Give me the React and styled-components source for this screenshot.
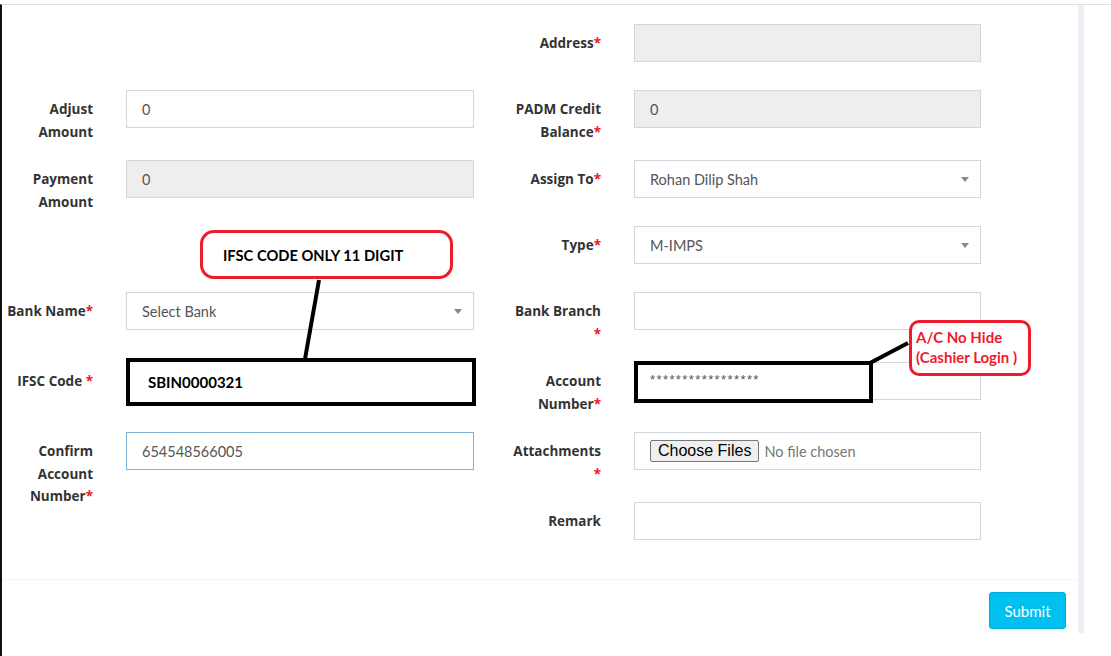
import React from "react";
import styled, { createGlobalStyle } from "styled-components";

const GlobalStyle = createGlobalStyle`
  html, body { margin: 0; padding: 0; background: #fff; }
  body { font-family: Lato, "Open Sans", sans-serif; color: #333; }
  * { box-sizing: border-box; }
`;

const Page = styled.div`
  width: 1111px;
  height: 656px;
  padding-top: 4px;
  overflow: hidden;
`;

const Frame = styled.div`
  height: 652px;
  border-top: 1px solid #dcdfe4;
  border-left: 2px solid #111;
`;

const Row = styled.div`
  display: flex;
  align-items: stretch;
`;

const Panel = styled.div`
  position: relative;
  width: 1076px;
  background: #fff;
`;

const Strip = styled.div`
  width: 6px;
  background: #eef0f5;
`;

const Body = styled.div`
  padding-top: 19px;
`;

const FormRow = styled.div`
  display: grid;
  grid-template-columns: 124px 348px 160px 347px;
  height: ${({ $h }) => $h}px;
  align-items: start;
`;

const Label = styled.div`
  padding: 8px 33px 0 0;
  text-align: right;
  font-family: "Open Sans", Lato, sans-serif;
  font-size: 13.5px;
  line-height: 22.5px;
  font-weight: 700;
  color: #333;
  white-space: nowrap;
`;

const Req = styled.span`
  color: #f0141e;
`;

const Input = styled.div`
  position: relative;
  height: 38px;
  display: flex;
  align-items: center;
  padding: 0 15px;
  border: 1px solid ${({ $focus }) => ($focus ? "#7fb3d6" : "#d2d6de")};
  background: ${({ $disabled }) => ($disabled ? "#eee" : "#fff")};
  font-size: 14.5px;
  color: #555;
`;

const Caret = styled.span`
  position: absolute;
  right: 11px;
  top: 16px;
  border-left: 4px solid transparent;
  border-right: 4px solid transparent;
  border-top: 5px solid #888;
`;

const Masked = styled.span`
  font-family: "Liberation Sans", Arial, sans-serif;
  font-size: 13px;
  letter-spacing: 1.4px;
  color: #555;
  margin-top: -4px;
`;

const FileButton = styled.span`
  font-family: "Liberation Sans", Arial, sans-serif;
  font-size: 16px;
  color: #000;
  background: #efefef;
  border: 1px solid #767676;
  border-radius: 2px;
  padding: 1px 7px;
  margin-right: 5px;
`;

const FileText = styled.span`
  color: #777;
`;

const Footer = styled.div`
  display: flex;
  justify-content: flex-end;
  padding: 12px 12px 4px;
  border-top: 1px solid #f4f4f4;
`;

const Submit = styled.button`
  width: 77px;
  height: 37px;
  border: 1px solid #00acd6;
  border-radius: 3px;
  background: #00c0ef;
  color: #fff;
  font-family: Lato, sans-serif;
  font-size: 15px;
`;

const Overlay = styled.svg`
  position: absolute;
  left: 0;
  top: 0;
  pointer-events: none;
`;

const Callout = styled.div`
  position: absolute;
  left: ${({ $x }) => $x}px;
  top: ${({ $y }) => $y}px;
  width: ${({ $w }) => $w}px;
  height: ${({ $h }) => $h}px;
  border: 3px solid #ec1c2c;
  border-radius: ${({ $r }) => $r}px;
  background: #fff;
  font-family: Lato, sans-serif;
  font-weight: 700;
`;

const CalloutOne = styled(Callout)`
  display: flex;
  align-items: center;
  padding-left: 20px;
  font-size: 14.7px;
  color: #000;
`;

const CalloutTwo = styled(Callout)`
  padding: 4px 0 0 4px;
  font-size: 15px;
  line-height: 20px;
  color: #ec1c2c;
`;

const Highlight = styled.div`
  position: absolute;
  left: ${({ $x }) => $x}px;
  top: ${({ $y }) => $y}px;
  width: ${({ $w }) => $w}px;
  height: ${({ $h }) => $h}px;
  border: 4px solid #000;
  display: flex;
  align-items: center;
  padding-left: 18px;
  font-size: 15px;
  font-weight: 700;
  color: #000;
  background: ${({ $fill }) => ($fill ? "#fff" : "transparent")};
`;

const Empty = () => <div />;

export default function App() {
  return (
    <>
      <GlobalStyle />
      <Page>
        <Frame>
          <Row>
            <Panel>
              <Body>
                <FormRow $h={66}>
                  <Empty />
                  <Empty />
                  <Label>Address<Req>*</Req></Label>
                  <Input $disabled />
                </FormRow>
                <FormRow $h={70}>
                  <Label>Adjust<br />Amount</Label>
                  <Input>0</Input>
                  <Label>PADM Credit<br />Balance<Req>*</Req></Label>
                  <Input $disabled>0</Input>
                </FormRow>
                <FormRow $h={66}>
                  <Label>Payment<br />Amount</Label>
                  <Input $disabled>0</Input>
                  <Label>Assign To<Req>*</Req></Label>
                  <Input>Rohan Dilip Shah<Caret /></Input>
                </FormRow>
                <FormRow $h={66}>
                  <Empty />
                  <Empty />
                  <Label>Type<Req>*</Req></Label>
                  <Input>M-IMPS<Caret /></Input>
                </FormRow>
                <FormRow $h={70}>
                  <Label>Bank Name<Req>*</Req></Label>
                  <Input>Select Bank<Caret /></Input>
                  <Label>Bank Branch<br /><Req>*</Req></Label>
                  <Input />
                </FormRow>
                <FormRow $h={70}>
                  <Label>IFSC Code <Req>*</Req></Label>
                  <Input />
                  <Label>Account<br />Number<Req>*</Req></Label>
                  <Input><Masked>*****************</Masked></Input>
                </FormRow>
                <FormRow $h={70}>
                  <Label>Confirm<br />Account<br />Number<Req>*</Req></Label>
                  <Input $focus>654548566005</Input>
                  <Label>Attachments<br /><Req>*</Req></Label>
                  <Input>
                    <FileButton>Choose Files</FileButton>
                    <FileText>No file chosen</FileText>
                  </Input>
                </FormRow>
                <FormRow $h={77}>
                  <Empty />
                  <Empty />
                  <Label>Remark</Label>
                  <Input />
                </FormRow>
              </Body>
              <Footer>
                <Submit>Submit</Submit>
              </Footer>

              <Highlight $x={124} $y={353} $w={350} $h={48} $fill>
                SBIN0000321
              </Highlight>
              <Highlight $x={632} $y={356} $w={239} $h={42} />
              <Overlay width="1076" height="640">
                <line x1="317" y1="275" x2="303" y2="354" stroke="#000" strokeWidth="4" />
                <line x1="868" y1="358" x2="906" y2="338" stroke="#000" strokeWidth="4" />
              </Overlay>
              <CalloutOne $x={198} $y={225} $w={253} $h={49} $r={14}>
                IFSC CODE ONLY 11 DIGIT
              </CalloutOne>
              <CalloutTwo $x={907} $y={315} $w={122} $h={56} $r={10}>
                A/C No Hide
                <br />
                (Cashier Login )
              </CalloutTwo>
            </Panel>
            <Strip />
          </Row>
        </Frame>
      </Page>
    </>
  );
}
